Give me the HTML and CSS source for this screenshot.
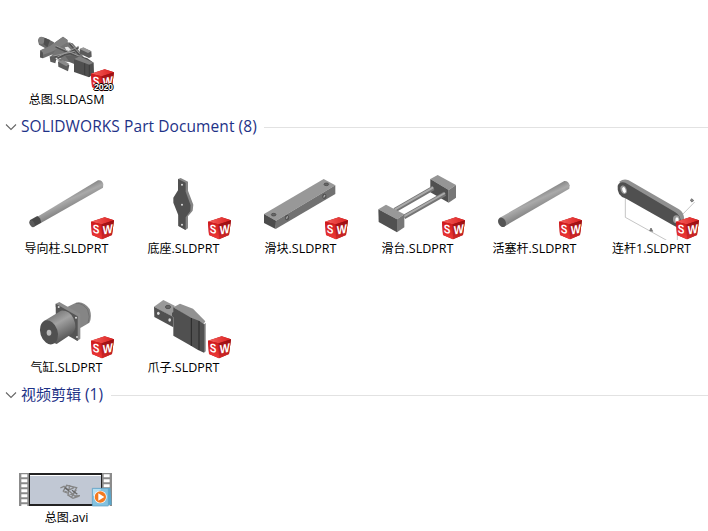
FILE: index.html
```
<!DOCTYPE html>
<html lang="zh-CN">
<head>
<meta charset="UTF-8">
<meta name="viewport" content="width=device-width, initial-scale=1.0">
<title>总图</title>
<link rel="stylesheet" href="styles.css">
</head>
<body>

  <!-- shared gradients and the SW badge -->
  <svg class="defs" width="0" height="0">
    <defs>
      <linearGradient id="rod" x1=".25" y1=".15" x2=".75" y2=".85">
        <stop offset=".25" stop-color="#777"/>
        <stop offset=".45" stop-color="#aaa"/>
        <stop offset=".8" stop-color="#6a6a6a"/>
      </linearGradient>
      <linearGradient id="tube" gradientUnits="userSpaceOnUse" x1="110" y1="78" x2="152" y2="152">
        <stop offset="0" stop-color="#757575"/>
        <stop offset=".4" stop-color="#a2a2a2"/>
        <stop offset="1" stop-color="#5a5a5a"/>
      </linearGradient>
      <linearGradient id="redtop" x1="0" y1="0" x2="1" y2="0">
        <stop offset="0" stop-color="#f4605c"/>
        <stop offset="1" stop-color="#dc2020"/>
      </linearGradient>
      <linearGradient id="redleft" x1="0" y1="0" x2="0" y2="1">
        <stop offset="0" stop-color="#cf181b"/>
        <stop offset="1" stop-color="#ee3a38"/>
      </linearGradient>
      <linearGradient id="redright" x1="0" y1="0" x2="0" y2="1">
        <stop offset="0" stop-color="#980d10"/>
        <stop offset="1" stop-color="#d42a2a"/>
      </linearGradient>
      <symbol id="sw" viewBox="240 153 72 72">
        <path d="M243 170 284 157 312 166 306 210 276 223 246 210Z" fill="#b51519"/>
        <path d="M243 170 284 157 312 166 275 178Z" fill="url(#redtop)"/>
        <path d="M243 170 275 178 276 223 246 210Z" fill="url(#redleft)"/>
        <path d="M275 178 312 166 306 210 276 223Z" fill="url(#redright)"/>
        <text class="sw-letter" transform="translate(248 203) skewY(10)" font-size="37" textLength="20" lengthAdjust="spacingAndGlyphs">S</text>
        <text class="sw-letter" transform="translate(278 209) skewY(-12)" font-size="37" textLength="30" lengthAdjust="spacingAndGlyphs">W</text>
      </symbol>
    </defs>
  </svg>

  <div class="files first">
    <div class="file">
      <div class="thumb">
        <svg viewBox="-36 -96 288 288">
          <path d="M24 37Q27 26 38 27L55 34 72 43 70 62 46 61 27 50Z" fill="#696969"/>
          <ellipse cx="34" cy="37" rx="9" ry="11" fill="#808080"/>
          <path d="M44 29 60 37 52 58 41 49Z" fill="#4f4f4f"/>
          <path d="M31 67 60 54 99 26 113 36 112 51 83 73 39 91 30 88Z" fill="#6d6d6d"/>
          <path d="M33 67 60 54 99 26 112 36 112 45 86 62 61 73 39 80Z" fill="#808080"/>
          <path d="M31 67 39 74 39 91 30 88Z" fill="#555"/>
          <path d="M78 64 113 43 128 46 145 65 165 92 140 105 86 98 62 86Z" fill="#757575"/>
          <path d="M104 58 114 56 124 67 112 72ZM72 91 88 86 94 91 82 96Z" fill="#e4e4e4"/>
          <path d="M77 56 170 99M70 88 135 73M119 46 149 81M82 91 146 58" fill="none" stroke="#505050" stroke-width="6"/>
          <path d="M77 53 171 95M70 84 134 70M119 43 149 77M82 87 146 55" fill="none" stroke="#999" stroke-width="3"/>
          <path d="M59 85 72 86 79 94 76 106 61 101ZM84 101 98 97 118 112 114 130 85 116Z" fill="#5c5c5c"/>
          <path d="M84 101 98 96 118 108 109 115Z" fill="#8a8a8a"/>
          <path d="M149 63 160 59 184 70 185 86 177 90 150 77Z" fill="#5b5b5b"/>
          <path d="M149 63 160 58 184 70 174 75Z" fill="#989898"/>
          <path d="M106 84 125 82 151 87 149 99 134 109 119 102Z" fill="#606060"/>
          <path d="M132 93 149 85 171 90 191 104 192 137 177 148 132 132Z" fill="#4f4f4f"/>
          <path d="M132 93 149 85 191 104 178 110Z" fill="#808080"/>
          <path d="M164 106V141M178 110V147" stroke="#333" stroke-width="2"/>
        </svg>
        <svg class="badge"><use href="#sw"/></svg>
        <span class="year">2020</span>
      </div>
      <div class="name"><span class="zh">总图</span>.SLDASM</div>
    </div>
  </div>

  <div class="group">
    <svg class="chevron" viewBox="0 0 12 8"><path d="M1 1.5 6 6.5 11 1.5"/></svg>
    <h2 class="parts">SOLIDWORKS Part Document (8)</h2>
    <hr>
  </div>

  <div class="files">
    <div class="file">
      <div class="thumb">
        <svg viewBox="24 -63 288 288">
          <path d="M82 155 264 46Q276 43 280 57L279 68 94 173Z" fill="url(#rod)"/>
          <path d="M59 166 82 153Q91 157 94 173L71 186Z" fill="#494949"/>
          <ellipse cx="66" cy="176" rx="7" ry="11" transform="rotate(-28 66 176)" fill="#5b5b5b"/>
        </svg>
        <svg class="badge"><use href="#sw"/></svg>
      </div>
      <div class="name"><span class="zh">导向柱</span>.SLDPRT</div>
    </div>
    <div class="file">
      <div class="thumb">
        <svg viewBox="15 -63 288 288">
          <path d="M144 42 152 39 174 50V77L190 119 188 137 174 154V190L166 195 145 182Z" fill="#858585"/>
          <path d="M144 42 167 53V80L182 121 181 138 167 157V195L145 183V151L130 113V98L144 76Z" fill="#505050"/>
          <g fill="#ddd"><circle cx="156" cy="59" r="3"/><circle cx="156" cy="119" r="3"/><circle cx="156" cy="179" r="3"/></g>
        </svg>
        <svg class="badge"><use href="#sw"/></svg>
      </div>
      <div class="name"><span class="zh">底座</span>.SLDPRT</div>
    </div>
    <div class="file">
      <div class="thumb">
        <svg viewBox="6 -63 288 288">
          <path d="M42 147 221 42 256 61 78 167Z" fill="#989898"/>
          <path d="M42 147 78 167 77 192 42 174Z" fill="#4c4c4c"/>
          <path d="M78 167 256 61V87L77 192Z" fill="#717171"/>
          <g fill="#666" stroke="#444" stroke-width="2">
            <ellipse cx="71" cy="149" rx="7" ry="4"/><ellipse cx="229" cy="58" rx="7" ry="4"/>
            <ellipse cx="111" cy="158" rx="5" ry="7"/><ellipse cx="223" cy="94" rx="5" ry="7"/>
          </g>
          <path d="M109 161 113 154M221 97 225 90" stroke="#bbb" stroke-width="3"/>
        </svg>
        <svg class="badge"><use href="#sw"/></svg>
      </div>
      <div class="name"><span class="zh">滑块</span>.SLDPRT</div>
    </div>
    <div class="file">
      <div class="thumb">
        <svg viewBox="3 -63 288 288">
          <path d="M187 42 209 30 264 60 242 75Z" fill="#959595"/>
          <path d="M187 42 242 75V113L187 82Z" fill="#505050"/>
          <path d="M242 75 264 60V98L242 113Z" fill="#777"/>
          <g stroke="#757575" stroke-width="14"><path d="M80 136 196 69M108 156 231 86"/></g>
          <g stroke="#aaa" stroke-width="6"><path d="M80 134 196 67M108 154 231 84"/></g>
          <path d="M31 133 54 119 109 148 87 163Z" fill="#989898"/>
          <path d="M31 133 87 163V202L32 171Z" fill="#505050"/>
          <path d="M87 163 109 148V187L87 202Z" fill="#777"/>
        </svg>
        <svg class="badge"><use href="#sw"/></svg>
      </div>
      <div class="name"><span class="zh">滑台</span>.SLDPRT</div>
    </div>
    <div class="file">
      <div class="thumb">
        <svg viewBox="3 -63 288 288">
          <path d="M43 159 238 48Q250 47 254 61L253 71 57 185Z" fill="url(#rod)"/>
          <ellipse cx="51" cy="172" rx="11" ry="15" transform="rotate(-28 51 172)" fill="#555"/>
        </svg>
        <svg class="badge"><use href="#sw"/></svg>
      </div>
      <div class="name"><span class="zh">活塞杆</span>.SLDPRT</div>
    </div>
    <div class="file">
      <div class="thumb">
        <svg viewBox="9 -63 288 288">
          <path d="M76 98V157L200 226M232 160V225M243 153 284 111" fill="none" stroke="#8a8a8a" stroke-width="1.5"/>
          <path d="M149 197 153 189 158 199ZM271 105 276 101 281 107 275 111Z" fill="#888" stroke="#555" stroke-width="2"/>
          <path d="M58 50Q71 40 86 46L237 133Q252 141 253 165L244 181 78 91Z" fill="#909090"/>
          <path d="M53 62Q59 49 76 53L226 142Q244 152 244 180L236 190 218 180 76 100Q50 91 53 62Z" fill="#505050"/>
          <ellipse cx="71" cy="74" rx="9" ry="13" transform="rotate(-20 71 74)" fill="#999"/>
          <ellipse cx="72" cy="75" rx="5" ry="9" transform="rotate(-20 72 75)" fill="#fff"/>
          <ellipse cx="229" cy="163" rx="10" ry="12" fill="#999"/>
          <ellipse cx="231" cy="165" rx="5" ry="8" fill="#fff"/>
        </svg>
        <svg class="badge"><use href="#sw"/></svg>
      </div>
      <div class="name"><span class="zh">连杆</span>1.SLDPRT</div>
    </div>
    <div class="file">
      <div class="thumb">
        <svg viewBox="24 -81 288 288">
          <path d="M170 52 198 38Q220 32 239 57 247 81 238 98L211 114Z" fill="#858585"/>
          <path d="M198 40Q217 38 233 59 242 82 234 99" fill="none" stroke="#666" stroke-width="2"/>
          <path d="M137 41 148 36 211 72V146L202 153 194 147V80L137 50Z" fill="#8b8b8b"/>
          <path d="M137 41 203 79V153L138 117Z" fill="#555"/>
          <path d="M102 93 153 62Q178 60 190 85 203 113 188 130L140 162 107 149Z" fill="url(#tube)"/>
          <ellipse cx="117" cy="127" rx="26" ry="37" transform="rotate(-18 117 127)" fill="#505050"/>
          <ellipse cx="117" cy="128" rx="7" ry="9" fill="#bbb"/>
          <g fill="#ddd"><circle cx="146" cy="51" r="3"/><circle cx="198" cy="83" r="3"/><circle cx="201" cy="141" r="3"/></g>
        </svg>
        <svg class="badge"><use href="#sw"/></svg>
      </div>
      <div class="name"><span class="zh">气缸</span>.SLDPRT</div>
    </div>
    <div class="file">
      <div class="thumb">
        <svg viewBox="15 -81 288 288">
          <path d="M72 50 100 30 134 47 132 66 126 80Z" fill="#999"/>
          <path d="M72 50 130 81V112L73 81Z" fill="#505050"/>
          <path d="M126 69 134 65V82H126Z" fill="#777"/>
          <path d="M130 52 150 41 189 56 226 94 219 104 183 86Z" fill="#929292"/>
          <path d="M130 52 183 83 207 92 222 103V188L204 180 184 168 130 137V81L126 77V69L130 66Z" fill="#505050"/>
          <path d="M222 103 227 99V184L222 188Z" fill="#777"/>
          <path d="M184 84V168M207 93V180" stroke="#292929" stroke-width="3"/>
          <ellipse cx="114" cy="51" rx="8" ry="5" fill="#666" stroke="#444" stroke-width="2"/>
          <g fill="#ddd"><ellipse cx="85" cy="70" rx="4" ry="5"/><ellipse cx="119" cy="90" rx="4" ry="5"/></g>
        </svg>
        <svg class="badge"><use href="#sw"/></svg>
      </div>
      <div class="name"><span class="zh">爪子</span>.SLDPRT</div>
    </div>
  </div>

  <div class="group video">
    <svg class="chevron" viewBox="0 0 12 8"><path d="M1 1.5 6 6.5 11 1.5"/></svg>
    <h2><span class="zh">视频剪辑</span> (1)</h2>
    <hr>
  </div>

  <div class="files">
    <div class="file">
      <div class="thumb">
        <svg viewBox="54 99 288 288">
          <path d="M57 279H336V378H57Z" fill="#8b8b8b"/>
          <path d="M87 279H306V378H87Z" fill="#222"/>
          <path d="M90 286H303V372H90Z" fill="#c1c8d4"/>
          <path d="M90 285H303V288H90Z" fill="#fff"/>
          <g stroke="#fff" stroke-dasharray="9 6">
            <path d="M73 283V378" stroke-width="18"/>
            <path d="M320 283V378" stroke-width="18"/>
          </g>
          <g stroke="#858585" fill="none" stroke-width="4">
            <path d="M181 324 192 319 224 348 240 347M189 335 200 316 230 323 218 345 194 336 222 323M202 344 219 355 238 348M209 315 204 345M229 329 213 354"/>
          </g>
          <path d="M194 323 207 332M216 331 232 343" stroke="#666" stroke-width="4"/>
          <path d="M283 327 331 323 335 374 285 377Z" fill="#5aa6cb"/>
          <path d="M277 325H325V378H277Z" fill="#84c2df" stroke="#5c9fc4" stroke-width="2"/>
          <path d="M279 327H304L279 349Z" fill="#b8dff0"/>
          <circle cx="301" cy="351" r="19" fill="#fff"/>
          <circle cx="301" cy="351" r="17" fill="#f47a20"/>
          <path d="M295 340V362L313 351Z" fill="#fff"/>
        </svg>
      </div>
      <div class="name"><span class="zh">总图</span>.avi</div>
    </div>
  </div>

</body>
</html>
```
FILE: styles.css
```
body {
  margin: 0;
  height: 531px;
  overflow: hidden;
  background-color: #fff;
  color: #000;
  font-family: "Open Sans", "Noto Sans CJK SC", sans-serif;
}
.defs {
  position: absolute;
}
.files {
  display: grid;
  grid-template-columns: repeat(6, 117px);
  grid-auto-rows: 119px;
  padding-left: 8px;
}
.files.first {
  margin-top: -4px;
}
.file {
  width: 117px;
}
.thumb {
  position: relative;
  width: 96px;
  height: 96px;
  margin-left: 10px;
}
.thumb svg {
  display: block;
  width: 96px;
  height: 96px;
}
.thumb .badge {
  position: absolute;
  left: 72px;
  top: 72px;
  width: 24px;
  height: 24px;
}
.sw-letter {
  fill: #fff;
  font-family: "Liberation Sans", sans-serif;
  font-weight: bold;
}
.year {
  position: absolute;
  left: 76px;
  top: 86px;
  font: bold 9px/10px "Liberation Sans", sans-serif;
  letter-spacing: -0.3px;
  color: #fff;
  text-shadow: 1px 0 #000, -1px 0 #000, 0 1px #000, 0 -1px #000;
}
.name {
  height: 16px;
  line-height: 18px;
  font-size: 12.5px;
  text-align: center;
  white-space: nowrap;
}
.first .name {
  line-height: 16px;
}
.name .zh {
  font-size: 12px;
}
.group {
  display: flex;
  align-items: center;
  height: 20px;
  padding: 2px 0 7px 5px;
}
.group.video {
  padding: 3px 0 8px 5px;
}
.chevron {
  width: 12px;
  height: 8px;
  fill: none;
  stroke: #666;
  stroke-width: 1.1;
}
h2 {
  margin: -2px 8px 0 4px;
  font-size: 15.5px;
  font-weight: normal;
  line-height: 20px;
  color: #1e3287;
  white-space: nowrap;
}
h2.parts {
  margin-right: 7px;
  letter-spacing: 0.08px;
}
h2 .zh {
  font-size: 15px;
}
hr {
  flex: 1;
  height: 1px;
  margin: 0;
  border: none;
  background-color: #e2e2e2;
}
```
